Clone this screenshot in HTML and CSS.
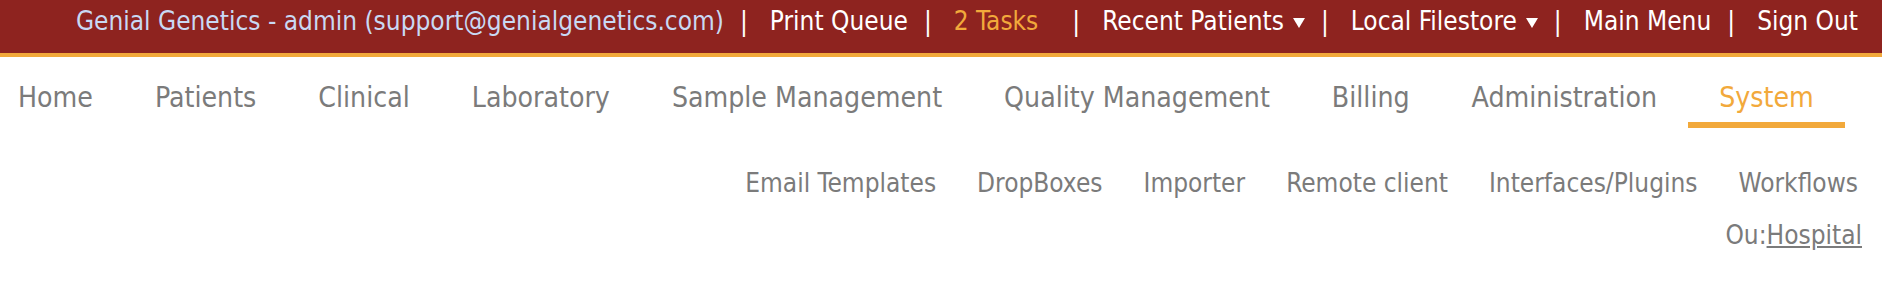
FILE: index.html
```html
<!DOCTYPE html>
<html>
<head>
<meta charset="utf-8">
<link rel="stylesheet" href="styles.css">
</head>
<body>
<div class="topbar">
  <span class="user">Genial Genetics - admin (support@genialgenetics.com)</span>
  <span class="sep">|</span>
  <a class="tlink">Print Queue</a>
  <span class="sep">|</span>
  <a class="tlink tasks">2 Tasks</a>
  <span class="sep">|</span>
  <a class="tlink">Recent Patients<svg class="caret" viewBox="0 0 12 10" width="12" height="10"><path d="M0 0H12L6 10Z" fill="#fff"/></svg></a>
  <span class="sep">|</span>
  <a class="tlink">Local Filestore<svg class="caret" viewBox="0 0 12 10" width="12" height="10"><path d="M0 0H12L6 10Z" fill="#fff"/></svg></a>
  <span class="sep">|</span>
  <a class="tlink">Main Menu</a>
  <span class="sep">|</span>
  <a class="tlink">Sign Out</a>
</div>
<nav class="mainnav">
  <a class="item">Home</a>
  <a class="item">Patients</a>
  <a class="item">Clinical</a>
  <a class="item">Laboratory</a>
  <a class="item">Sample Management</a>
  <a class="item">Quality Management</a>
  <a class="item">Billing</a>
  <a class="item">Administration</a>
  <a class="item active">System</a>
</nav>
<nav class="subnav">
  <a class="sub">Email Templates</a>
  <a class="sub">DropBoxes</a>
  <a class="sub">Importer</a>
  <a class="sub">Remote client</a>
  <a class="sub">Interfaces/Plugins</a>
  <a class="sub">Workflows</a>
</nav>
<div class="ou">Ou:<a class="oulink">Hospital</a></div>
</body>
</html>
```
FILE: styles.css
```css
html, body {
  margin: 0;
  padding: 0;
  background: #fff;
}
body {
  font-family: "DejaVu Sans Condensed", "DejaVu Sans", sans-serif;
  font-stretch: condensed;
  width: 1882px;
  height: 284px;
  overflow: hidden;
}
.topbar {
  box-sizing: border-box;
  height: 57px;
  background: #8e231f;
  border-bottom: 4px solid #f2a93b;
  display: flex;
  justify-content: flex-end;
  align-items: flex-start;
  padding: 6px 24px 0 0;
  font-size: 26px;
  line-height: 30px;
  color: #fff;
  white-space: nowrap;
}
.user {
  color: #c9d9f3;
}
.sep {
  margin: 0 22px 0 16px;
}
.tlink {
  color: #fff;
}
.tasks {
  color: #f2a93b;
  margin-right: 18px;
}
.caret {
  margin-left: 9px;
  vertical-align: 2px;
}
.mainnav {
  display: flex;
  margin-top: 24px;
  font-size: 28.2px;
  line-height: 33px;
  white-space: nowrap;
}
.item {
  color: #7b7b7b;
  padding: 0 31px 8px;
  border-bottom: 6px solid transparent;
}
.item:first-child {
  padding-left: 18px;
}
.item.active {
  color: #f2a93b;
  border-bottom-color: #f2a93b;
}
.subnav {
  display: flex;
  justify-content: flex-end;
  gap: 41px;
  margin-top: 40px;
  padding-right: 24px;
  font-size: 26px;
  line-height: 30px;
  white-space: nowrap;
}
.sub {
  color: #7b7b7b;
}
.ou {
  text-align: right;
  margin-top: 22px;
  padding-right: 20px;
  font-size: 26px;
  line-height: 30px;
  color: #7b7b7b;
}
.oulink {
  color: #7b7b7b;
  text-decoration: underline;
}
```
